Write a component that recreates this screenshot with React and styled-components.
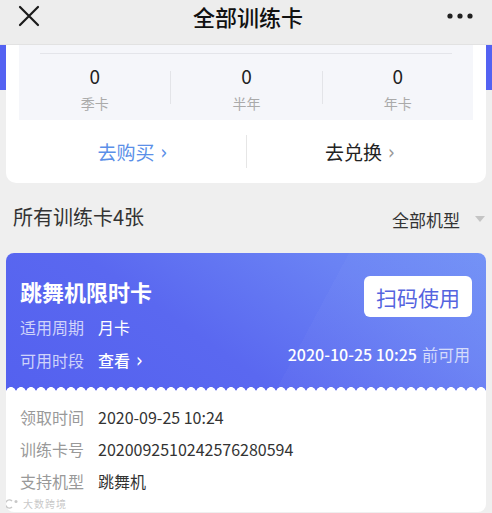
import React from 'react';
import styled, { createGlobalStyle } from 'styled-components';

const Global = createGlobalStyle`
  html, body {
    margin: 0;
    padding: 0;
    background: #efefef;
    font-family: "Noto Sans CJK SC", "Noto Sans", sans-serif;
    overflow: hidden;
  }
`

const Page = styled.div`
  width: 492px;
  height: 513px;
  position: relative;
  overflow: hidden;
`

const Header = styled.div`
  height: 45px;
  background: #ededed;
  border-bottom: 1px solid #e2e2e2;
  box-sizing: border-box;
  display: flex;
  align-items: flex-start;
  justify-content: space-between;
  padding: 3px 18px 0 18px;
`

const Title = styled.div`
  font-size: 22px;
  font-weight: 500;
  color: #111;
  line-height: 26px;
  margin-left: 8px;
`

const IconBtn = styled.div`
  width: 26px;
  height: 26px;
  display: flex;
  align-items: center;
  justify-content: center;
`

const Top = styled.div`
  padding: 0 6px;
  background: linear-gradient(#5462f2 0, #5462f2 45px, transparent 45px);
`

const SummaryCard = styled.div`
  background: #fff;
  border-radius: 0 0 10px 10px;
  padding: 0 13px;
`

const Stats = styled.div`
  background: #f5f6fa;
  height: 75px;
  padding: 8px 21px 0 21px;
  box-sizing: border-box;
`

const StatsLine = styled.div`
  height: 1px;
  background: #e4e5ea;
`

const StatsRow = styled.div`
  display: grid;
  grid-template-columns: repeat(3, 1fr);
  margin: 0 -21px;
  padding-top: 17px;
`

const Stat = styled.div`
  display: flex;
  flex-direction: column;
  align-items: center;
  border-left: ${p => (p.$first ? 'none' : '1px solid #e3e4e8')};
  height: 33px;
`

const StatNum = styled.div`
  font-size: 19px;
  color: #222;
  line-height: 20px;
  margin-top: -5px;
`

const StatLabel = styled.div`
  font-size: 14px;
  color: #aaa;
  line-height: 18px;
  margin-top: 8px;
`

const Actions = styled.div`
  display: grid;
  grid-template-columns: 1fr 1fr;
  height: 63px;
  align-items: center;
`

const Action = styled.div`
  display: flex;
  align-items: center;
  justify-content: center;
  gap: 6px;
  height: 33px;
  font-size: 19px;
  color: ${p => (p.$blue ? '#5b8fe8' : '#222')};
  border-left: ${p => (p.$divider ? '1px solid #e6e6e6' : 'none')};
`

const Chevron = styled.span`
  font-size: 17px;
  color: ${p => p.color || '#999'};
  font-family: "DejaVu Sans", sans-serif;
  transform: scaleY(1.1);
`

const ListHead = styled.div`
  display: flex;
  align-items: center;
  justify-content: space-between;
  padding: 18px 7px 0 13px;
  height: 50px;
  box-sizing: border-box;
`

const ListTitle = styled.div`
  font-size: 20px;
  color: #333;
  margin-top: -2px;
`

const Filter = styled.div`
  display: flex;
  align-items: center;
  gap: 15px;
  font-size: 17px;
  color: #333;
  margin-top: 4px;
`

const Triangle = styled.span`
  width: 0;
  height: 0;
  border-left: 5px solid transparent;
  border-right: 5px solid transparent;
  border-top: 6px solid #c4c4c4;
`

const Card = styled.div`
  margin: 20px 6px 0 6px;
  border-radius: 8px;
  overflow: hidden;
  background: #fff;
  height: 259px;
`

const CardTop = styled.div`
  position: relative;
  height: 138px;
  padding: 22px 14px 0 14px;
  box-sizing: border-box;
  background:
    linear-gradient(118deg, rgba(255,255,255,0) 0%, rgba(255,255,255,0) 62%, rgba(255,255,255,0.025) 62%, rgba(255,255,255,0.025) 100%),
    linear-gradient(35deg, #5461ef 0%, #5a68f0 40%, #6a82f4 75%, #7190f6 100%);
  color: #fff;

  &::after {
    content: '';
    position: absolute;
    left: 0;
    right: 0;
    bottom: 0;
    height: 7px;
    background: radial-gradient(circle at 5px 8px, #fff 4.6px, transparent 5.2px) repeat-x;
    background-size: 10px 7px;
  }
`

const TopRow = styled.div`
  display: flex;
  justify-content: space-between;
  align-items: flex-start;
`

const CardName = styled.div`
  font-size: 22px;
  font-weight: 700;
  line-height: 30px;
  margin-top: 1px;
`

const ScanBtn = styled.div`
  width: 108px;
  height: 41px;
  background: #fff;
  border-radius: 6px;
  color: #5564df;
  font-size: 21px;
  display: flex;
  align-items: center;
  justify-content: center;
  margin-top: 1px;
`

const InfoRow = styled.div`
  display: flex;
  align-items: center;
  justify-content: space-between;
  height: ${p => (p.$tight ? '32px' : '33px')};
  font-size: 16px;
`

const InfoLeft = styled.div`
  display: flex;
  align-items: center;
`

const Label = styled.span`
  color: ${p => (p.$light ? 'rgba(255,255,255,0.72)' : '#999')};
  width: 78px;
  flex-shrink: 0;
`

const Value = styled.span`
  color: ${p => (p.$light ? '#fff' : '#333')};
  font-weight: ${p => (p.$bold ? 500 : 400)};
  display: flex;
  align-items: center;
  gap: 6px;
`

const Expire = styled.div`
  font-size: 16px;
  font-weight: 500;
  margin-top: -12px;
  margin-right: 2px;
  span {
    font-weight: 400;
    color: rgba(255,255,255,0.72);
    margin-left: 5px;
  }
`

const Details = styled.div`
  padding: 10px 14px 0 14px;
`

const Watermark = styled.div`
  position: absolute;
  left: 6px;
  bottom: 3px;
  font-size: 10px;
  line-height: 12px;
  color: rgba(185,185,185,0.8);
  letter-spacing: 1px;
  display: flex;
  align-items: center;
  gap: 3px;
`

const stats = [
  { num: 0, label: '季卡' },
  { num: 0, label: '半年' },
  { num: 0, label: '年卡' },
]

const details = [
  { label: '领取时间', value: '2020-09-25 10:24' },
  { label: '训练卡号', value: '2020092510242576280594' },
  { label: '支持机型', value: '跳舞机' },
]

const App = () => {
  return (
    <Page>
      <Global />
      <Header>
        <IconBtn style={{ marginLeft: -2 }}>
          <svg width="22" height="22" viewBox="0 0 22 22">
            <path d="M2 2 L20 20 M20 2 L2 20" stroke="#1a1a1a" strokeWidth="2.2" strokeLinecap="round" />
          </svg>
        </IconBtn>
        <Title>全部训练卡</Title>
        <IconBtn style={{ width: 28 }}>
          <svg width="26" height="6" viewBox="0 0 26 6">
            <circle cx="3" cy="3" r="2.6" fill="#222" />
            <circle cx="13" cy="3" r="2.6" fill="#222" />
            <circle cx="23" cy="3" r="2.6" fill="#222" />
          </svg>
        </IconBtn>
      </Header>

      <Top>
        <SummaryCard>
          <Stats>
            <StatsLine />
            <StatsRow>
              {stats.map((s, i) => (
                <Stat key={s.label} $first={i === 0}>
                  <StatNum>{s.num}</StatNum>
                  <StatLabel>{s.label}</StatLabel>
                </Stat>
              ))}
            </StatsRow>
          </Stats>
          <Actions>
            <Action $blue>
              去购买<Chevron color="#5b8fe8">›</Chevron>
            </Action>
            <Action $divider>
              去兑换<Chevron>›</Chevron>
            </Action>
          </Actions>
        </SummaryCard>
      </Top>

      <ListHead>
        <ListTitle>所有训练卡4张</ListTitle>
        <Filter>
          全部机型
          <Triangle />
        </Filter>
      </ListHead>

      <Card>
        <CardTop>
          <TopRow>
            <CardName>跳舞机限时卡</CardName>
            <ScanBtn>扫码使用</ScanBtn>
          </TopRow>
          <InfoRow style={{ marginTop: -7 }}>
            <InfoLeft>
              <Label $light>适用周期</Label>
              <Value $light>月卡</Value>
            </InfoLeft>
          </InfoRow>
          <InfoRow>
            <InfoLeft>
              <Label $light>可用时段</Label>
              <Value $light $bold>
                查看<Chevron color="#fff">›</Chevron>
              </Value>
            </InfoLeft>
            <Expire>
              2020-10-25 10:25<span>前可用</span>
            </Expire>
          </InfoRow>
        </CardTop>
        <Details>
          {details.map(d => (
            <InfoRow key={d.label} $tight>
              <InfoLeft>
                <Label>{d.label}</Label>
                <Value>{d.value}</Value>
              </InfoLeft>
            </InfoRow>
          ))}
        </Details>
      </Card>
      <Watermark>
        <svg width="14" height="10" viewBox="0 0 14 10">
          <path d="M6 2 A4 4 0 1 0 6 8" stroke="rgba(185,185,185,0.8)" strokeWidth="1.5" fill="none" />
          <circle cx="10" cy="2.5" r="1.5" fill="rgba(185,185,185,0.8)" />
        </svg>
        大数跨境
      </Watermark>
    </Page>
  )
}

export default App
